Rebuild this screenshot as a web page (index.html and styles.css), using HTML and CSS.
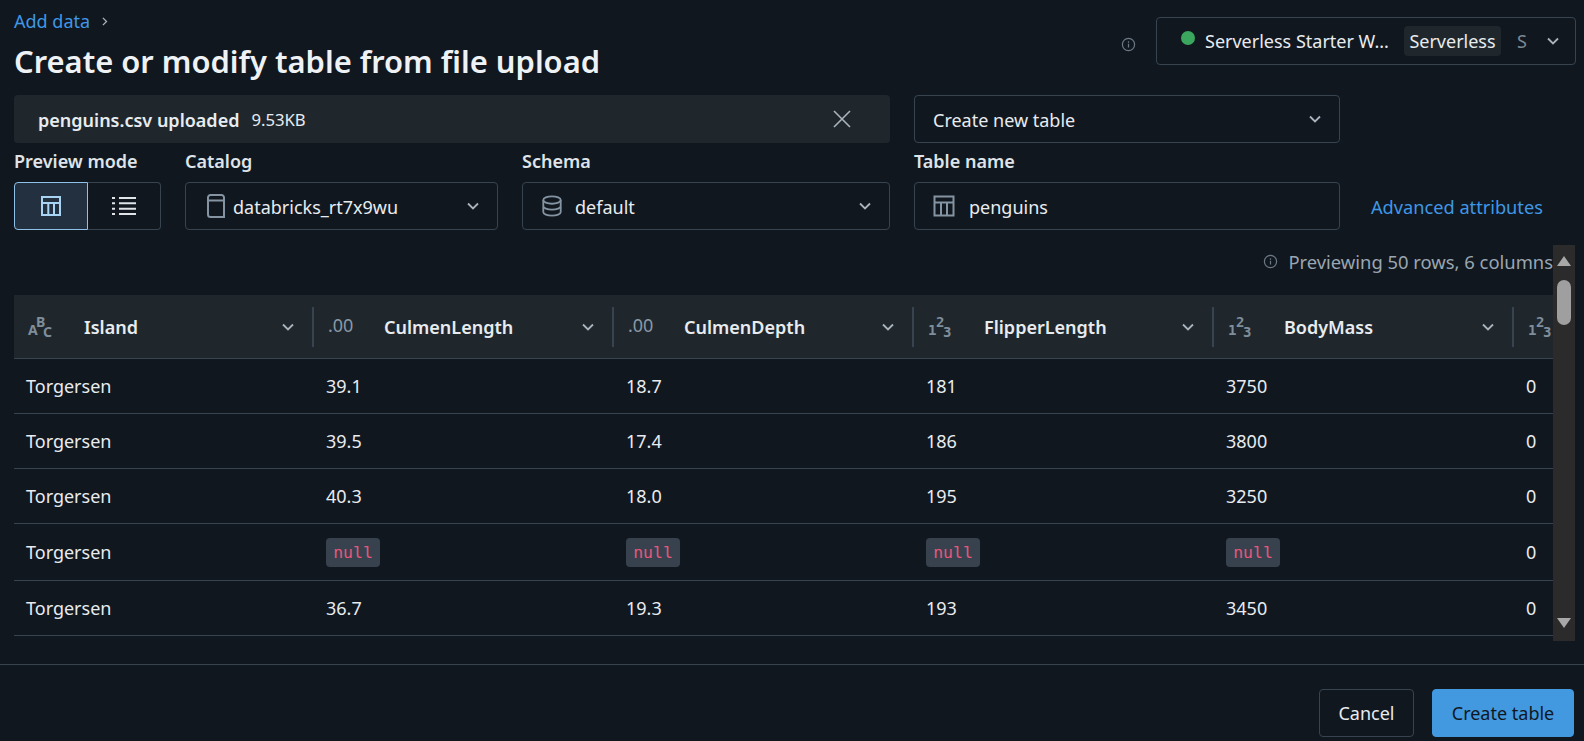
FILE: index.html
```html
<!DOCTYPE html>
<html lang="en">
<head>
  <meta charset="UTF-8">
  <meta name="viewport" content="width=device-width, initial-scale=1.0">
  <title>Create or modify table from file upload</title>
  <link rel="stylesheet" href="styles.css">
</head>
<body>
  <header class="top">
    <div class="heading">
      <div class="crumbs">
        <a class="link">Add data</a>
        <svg class="crumb-chevron" viewBox="0 0 16 16"><path d="M6 3.5 10.5 8 6 12.5"/></svg>
      </div>
      <h1>Create or modify table from file upload</h1>
    </div>
    <svg class="info info-top" viewBox="0 0 16 16"><circle cx="8" cy="8" r="6.5"/><path d="M8 7.2v4M8 4.6v1.4"/></svg>
    <div class="compute">
      <span class="dot"></span>
      <span class="compute-name">Serverless Starter W...</span>
      <span class="tag">Serverless</span>
      <span class="compute-s">S</span>
      <svg class="chevron" viewBox="0 0 16 16"><path d="M3 5.500l5 5 5-5"/></svg>
    </div>
  </header>

  <section class="upload-row">
    <div class="upload-bar">
      <span class="file-name">penguins.csv uploaded</span>
      <span class="file-size">9.53KB</span>
      <svg class="close" viewBox="0 0 20 20"><path d="M2 2 18 18M18 2 2 18"/></svg>
    </div>
    <div class="field select mode-select">
      <span class="field-text">Create new table</span>
      <svg class="chevron" viewBox="0 0 16 16"><path d="M3 5.500l5 5 5-5"/></svg>
    </div>
  </section>

  <section class="form-row">
    <div class="group group-mode">
      <label>Preview mode</label>
      <div class="toggle">
        <span class="toggle-btn active">
          <svg class="icon icon-active" viewBox="0 0 22 22"><path d="M2 2h18v18H2zM2 8h18M8.3 8v12M14 8v12"/></svg>
        </span>
        <span class="toggle-btn">
          <svg class="icon icon-list" viewBox="0 0 24 22"><path d="M7 3h17M7 8.300h17M7 13.700h17M7 19h17M0 3h3M0 8.300h3M0 13.700h3M0 19h3"/></svg>
        </span>
      </div>
    </div>
    <div class="group group-catalog">
      <label>Catalog</label>
      <div class="field select">
        <svg class="icon icon-catalog" viewBox="0 0 18 24"><path d="M1 3.500a2.500 2.500 0 0 1 2.500-2.500h11a2.500 2.500 0 0 1 2.500 2.500v19.500H3.500a2.500 2.500 0 0 1-2.500-2.500zM1 6.500h16"/></svg>
        <span class="field-text">databricks_rt7x9wu</span>
        <svg class="chevron" viewBox="0 0 16 16"><path d="M3 5.500l5 5 5-5"/></svg>
      </div>
    </div>
    <div class="group group-schema">
      <label>Schema</label>
      <div class="field select">
        <svg class="icon icon-schema" viewBox="0 0 24 24"><ellipse cx="12" cy="5.500" rx="9.500" ry="4"/><path d="M2.500 5.500v13c0 2.200 4.300 4 9.500 4s9.500-1.800 9.500-4v-13M2.500 12c0 2.200 4.300 4 9.500 4s9.500-1.800 9.500-4"/></svg>
        <span class="field-text">default</span>
        <svg class="chevron" viewBox="0 0 16 16"><path d="M3 5.500l5 5 5-5"/></svg>
      </div>
    </div>
    <div class="group group-name">
      <label>Table name</label>
      <div class="field">
        <svg class="icon icon-name" viewBox="0 0 22 22"><path d="M1.500 1.500h19v19h-19zM1.500 7.500h19M8 7.500v13M14 7.500v13"/></svg>
        <span class="field-text">penguins</span>
      </div>
    </div>
    <a class="link advanced">Advanced attributes</a>
  </section>

  <section class="preview">
    <div class="preview-main">
      <p class="preview-note">
        <svg class="info" viewBox="0 0 16 16"><circle cx="8" cy="8" r="6.500"/><path d="M8 7.200v4M8 4.600v1.400"/></svg>
        Previewing 50 rows, 6 columns
      </p>
      <table class="grid">
        <colgroup>
          <col class="col-first"><col class="col"><col class="col"><col class="col"><col class="col"><col class="col-last">
        </colgroup>
        <thead>
          <tr>
            <th class="th-first"><div class="th-inner">
              <span class="type type-abc"><i class="t-a">A</i><i class="t-b">B</i><i class="t-c">C</i></span>
              <span class="th-label">Island</span>
              <svg class="chevron" viewBox="0 0 16 16"><path d="M3 5.500l5 5 5-5"/></svg>
            </div></th>
            <th><div class="th-inner">
              <span class="type type-dec">.00</span>
              <span class="th-label">CulmenLength</span>
              <svg class="chevron" viewBox="0 0 16 16"><path d="M3 5.500l5 5 5-5"/></svg>
            </div></th>
            <th><div class="th-inner">
              <span class="type type-dec">.00</span>
              <span class="th-label">CulmenDepth</span>
              <svg class="chevron" viewBox="0 0 16 16"><path d="M3 5.500l5 5 5-5"/></svg>
            </div></th>
            <th><div class="th-inner">
              <span class="type type-num"><i class="t-a">1</i><i class="t-b">2</i><i class="t-c">3</i></span>
              <span class="th-label">FlipperLength</span>
              <svg class="chevron" viewBox="0 0 16 16"><path d="M3 5.500l5 5 5-5"/></svg>
            </div></th>
            <th><div class="th-inner">
              <span class="type type-num"><i class="t-a">1</i><i class="t-b">2</i><i class="t-c">3</i></span>
              <span class="th-label">BodyMass</span>
              <svg class="chevron" viewBox="0 0 16 16"><path d="M3 5.500l5 5 5-5"/></svg>
            </div></th>
            <th><div class="th-inner">
              <span class="type type-num"><i class="t-a">1</i><i class="t-b">2</i><i class="t-c">3</i></span>
            </div></th>
          </tr>
        </thead>
        <tbody>
          <tr><td>Torgersen</td><td>39.1</td><td>18.7</td><td>181</td><td>3750</td><td>0</td></tr>
          <tr><td>Torgersen</td><td>39.5</td><td>17.4</td><td>186</td><td>3800</td><td>0</td></tr>
          <tr><td>Torgersen</td><td>40.3</td><td>18.0</td><td>195</td><td>3250</td><td>0</td></tr>
          <tr class="row-null"><td>Torgersen</td><td><code>null</code></td><td><code>null</code></td><td><code>null</code></td><td><code>null</code></td><td>0</td></tr>
          <tr><td>Torgersen</td><td>36.7</td><td>19.3</td><td>193</td><td>3450</td><td>0</td></tr>
        </tbody>
      </table>
    </div>
    <div class="scrollbar">
      <span class="arrow-up"></span>
      <span class="thumb"></span>
      <span class="arrow-down"></span>
    </div>
  </section>

  <footer class="actions">
    <button class="btn btn-cancel">Cancel</button>
    <button class="btn btn-primary">Create table</button>
  </footer>
</body>
</html>
```

FILE: styles.css
```css
* {
    box-sizing: border-box;
}

html, body {
    height: 741px;
    overflow: hidden;
}

body {
    margin: 0;
    background-color: #11171f;
    color: #e8ecf0;
    font-family: "Noto Sans", "Open Sans", sans-serif;
    font-size: 18px;
}

.link {
    color: #3f97e6;
}

/* header */
.top {
    display: flex;
    align-items: flex-start;
    height: 95px;
    padding: 0 8px 0 14px;
}

.heading {
    flex: 1;
}

.crumbs {
    display: flex;
    align-items: center;
    gap: 8px;
    height: 22px;
    margin-top: 10px;
}

.crumb-chevron {
    width: 13px;
    height: 13px;
    fill: none;
    stroke: #aab4bd;
    stroke-width: 1.6;
}

h1 {
    margin: 5px 0 0;
    font-size: 30.9px;
    line-height: 48px;
    font-weight: 600;
    color: #eff2f5;
}

.info {
    width: 15px;
    height: 15px;
    fill: none;
    stroke: #6c7883;
    stroke-width: 1.3;
    flex: none;
}

.info-top {
    margin: 37px 20px 0 0;
}

.compute {
    display: flex;
    align-items: center;
    width: 420px;
    height: 48px;
    margin-top: 17px;
    padding: 0 14px 0 24px;
    border: 1px solid #37444f;
    border-radius: 4px;
}

.dot {
    width: 14px;
    height: 14px;
    margin-top: -6px;
    flex: none;
    border-radius: 50%;
    background-color: #3ba65e;
}

.compute-name {
    margin-left: 10px;
    width: 199px;
    white-space: nowrap;
}

.tag {
    width: 97px;
    height: 30px;
    line-height: 30px;
    text-align: center;
    background-color: #1f272d;
    border-radius: 4px;
}

.compute-s {
    margin-left: 16px;
    color: #7b8894;
}

.chevron {
    width: 16px;
    height: 16px;
    flex: none;
    fill: none;
    stroke: #aab4bd;
    stroke-width: 1.8;
}

.compute .chevron {
    margin-left: auto;
}

/* upload row */
.upload-row {
    display: flex;
    gap: 24px;
    padding-left: 14px;
}

.upload-bar {
    display: flex;
    align-items: center;
    width: 876px;
    height: 48px;
    padding: 0 38px 0 24px;
    background-color: #1f272d;
    border-radius: 4px;
}

.file-name {
    padding-top: 1px;
    font-weight: 600;
}

.file-size {
    padding-top: 1px;
    margin-left: 12px;
    font-size: 16.7px;
}

.close {
    width: 20px;
    height: 20px;
    margin-left: auto;
    fill: none;
    stroke: #aab4bd;
    stroke-width: 1.6;
}

.field {
    display: flex;
    align-items: center;
    height: 48px;
    padding: 0 16px 0 18px;
    border: 1px solid #37444f;
    border-radius: 4px;
}

.field-text {
    padding-top: 1px;
}

.field .chevron {
    margin-left: auto;
}

.mode-select {
    width: 426px;
}

/* form row */
.form-row {
    display: flex;
    align-items: flex-end;
    margin-top: 5px;
    padding-left: 14px;
}

label {
    display: block;
    height: 34px;
    line-height: 26px;
    font-weight: 600;
    color: #dfe4e9;
}

.group-mode {
    width: 147px;
    margin-right: 24px;
}

.group-catalog {
    width: 313px;
    margin-right: 24px;
}

.group-schema {
    width: 368px;
    margin-right: 24px;
}

.group-name {
    width: 426px;
}

.toggle {
    display: flex;
    height: 48px;
}

.toggle-btn {
    display: flex;
    align-items: center;
    justify-content: center;
    width: 73px;
    border: 1px solid #37444f;
    border-left: 0;
    border-radius: 0 4px 4px 0;
}

.toggle-btn.active {
    width: 74px;
    background-color: #22303f;
    border: 1px solid #8fc0e8;
    border-radius: 4px 0 0 4px;
}

.icon {
    width: 22px;
    height: 22px;
    flex: none;
    margin-right: 10px;
    fill: none;
    stroke: #8494a2;
    stroke-width: 2;
}

.toggle .icon {
    margin-right: 0;
}

.icon-active {
    stroke: #a9d3f2;
}

.icon-list {
    width: 24px;
    stroke: #dfe4e9;
}

.icon-catalog {
    width: 18px;
    height: 24px;
    margin: 0 8px 0 3px;
}

.icon-schema {
    margin-right: 12px;
}

.icon-name {
    margin-right: 14px;
}

.advanced {
    margin: 0 0 11px 31px;
    font-size: 18.2px;
    white-space: nowrap;
}

/* preview table */
.preview {
    display: flex;
    height: 396px;
    margin-top: 15px;
    padding-left: 14px;
}

.preview-main {
    width: 1539px;
    overflow: hidden;
}

.preview-note {
    display: flex;
    align-items: center;
    justify-content: flex-end;
    gap: 10px;
    height: 50px;
    margin: 0;
    padding-bottom: 18px;
    font-size: 18.4px;
    white-space: nowrap;
    color: #9aa6b1;
}

.grid {
    table-layout: fixed;
    width: 1539px;
    border-collapse: separate;
    border-spacing: 0;
}

.col-first {
    width: 298px;
}

.col {
    width: 300px;
}

.col-last {
    width: 41px;
}

thead tr {
    height: 64px;
    background-color: #1f272d;
}

th {
    padding: 0;
    border-bottom: 1px solid #37444f;
    font-weight: 600;
    text-align: left;
}

.th-inner {
    display: flex;
    align-items: center;
    height: 40px;
    padding: 0 16px 0 14px;
    border-left: 2px solid #37444f;
}

.th-first .th-inner {
    border-left: 0;
}

.th-label {
    margin-left: 30px;
}

.th-inner .chevron {
    margin-left: auto;
}

.type {
    display: inline-block;
    width: 26px;
    height: 28px;
    flex: none;
    position: relative;
    color: #7f8e9b;
    font-weight: 700;
}

.type i {
    position: absolute;
    font-style: normal;
    font-size: 14px;
    line-height: 14px;
}

.t-a {
    left: 0;
    top: 10px;
}

.t-b {
    left: 8px;
    top: 2px;
}

.t-c {
    left: 15px;
    top: 12px;
}

.type-num {
    font-family: "DejaVu Sans Mono", monospace;
}

.type-dec {
    color: #8a98a5;
    font-size: 18px;
    font-weight: 400;
    line-height: 24px;
}

tbody tr {
    height: 55px;
}

tbody .row-null {
    height: 57px;
}

td {
    padding: 0 0 0 14px;
    border-bottom: 1px solid #37444f;
}

td:first-child {
    padding-left: 12px;
}

code {
    display: block;
    width: 54px;
    height: 29px;
    line-height: 29px;
    text-align: center;
    font-family: "DejaVu Sans Mono", monospace;
    font-size: 16.5px;
    color: #e8577c;
    background-color: #37424e;
    border-radius: 4px;
}

.scrollbar {
    display: flex;
    flex-direction: column;
    align-items: center;
    width: 22px;
    background-color: #2b2b2b;
}

.arrow-up, .arrow-down {
    width: 0;
    height: 0;
    border-left: 7px solid transparent;
    border-right: 7px solid transparent;
}

.arrow-up {
    margin-top: 11px;
    border-bottom: 10px solid #a8a8a8;
}

.thumb {
    width: 14px;
    height: 45px;
    margin-top: 14px;
    background-color: #9f9f9f;
    border-radius: 7px;
}

.arrow-down {
    margin-top: auto;
    margin-bottom: 13px;
    border-top: 10px solid #a8a8a8;
}

/* footer */
.actions {
    display: flex;
    justify-content: flex-end;
    gap: 18px;
    height: 100px;
    margin-top: 23px;
    padding: 24px 10px 0 0;
    border-top: 1px solid #37444f;
}

.btn {
    width: 142px;
    height: 48px;
    font-family: inherit;
    font-size: 18px;
    border-radius: 4px;
}

.btn-cancel {
    width: 95px;
    color: #e8ecf0;
    background-color: #11171f;
    border: 1px solid #37444f;
}

.btn-primary {
    color: #11171f;
    background-color: #4299e0;
    border: 1px solid #4299e0;
}
```
